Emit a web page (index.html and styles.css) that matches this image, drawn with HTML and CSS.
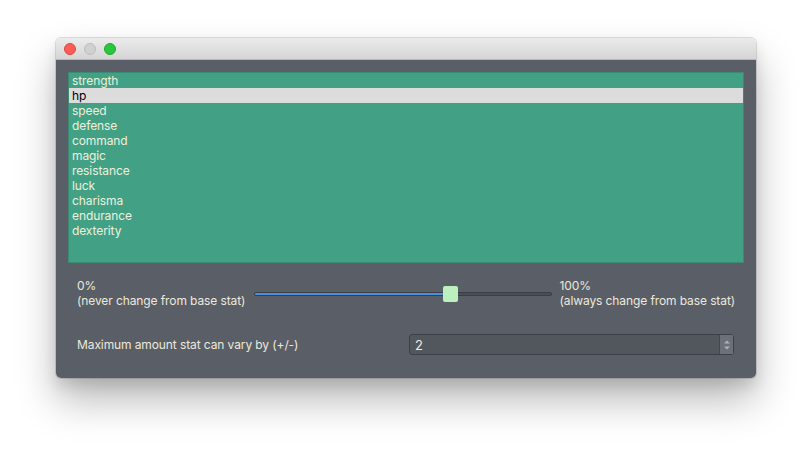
FILE: index.html
```html
<!DOCTYPE html>
<html>
<head>
<meta charset="utf-8">
<link rel="stylesheet" href="styles.css">
</head>
<body>
<div class="window">
  <div class="titlebar">
    <span class="light red"></span>
    <span class="light grey"></span>
    <span class="light green"></span>
  </div>
  <div class="content">
    <ul class="list">
      <li>strength</li>
      <li class="sel">hp</li>
      <li>speed</li>
      <li>defense</li>
      <li>command</li>
      <li>magic</li>
      <li>resistance</li>
      <li>luck</li>
      <li>charisma</li>
      <li>endurance</li>
      <li>dexterity</li>
    </ul>
    <div class="slider-row">
      <div class="label">0%<br>(never change from base stat)</div>
      <div class="slider">
        <div class="groove">
          <div class="fill" style="width:64%"></div>
        </div>
        <div class="handle" style="left:63.5%"></div>
      </div>
      <div class="label">100%<br>(always change from base stat)</div>
    </div>
    <div class="spin-row">
      <div class="spin-label">Maximum amount stat can vary by (+/-)</div>
      <div class="spin">
        <span class="value">2</span>
        <span class="arrows">
          <svg width="10" height="16" viewBox="0 0 10 16"><path d="M2 6.5 L5 3.5 L8 6.5 Z" fill="#aeb2b8"/><path d="M2 9.5 L5 12.5 L8 9.5 Z" fill="#aeb2b8"/></svg>
        </span>
      </div>
    </div>
  </div>
</div>
</body>
</html>
```

FILE: styles.css
```css
html, body { margin: 0; padding: 0; background: #ffffff; }
body {
  width: 812px; height: 452px;
  font-family: Inter, "Noto Sans", sans-serif;
  font-size: 12px;
  letter-spacing: -0.1px;
  padding: 38px 0 0 56px;
  box-sizing: border-box;
}
.window {
  width: 700px;
  height: 340px;
  border-radius: 5px;
  overflow: hidden;
  box-shadow: 0 0 0 1px rgba(0,0,0,0.12), 0 22px 40px rgba(0,0,0,0.28), 0 8px 14px rgba(0,0,0,0.1);
  display: flex;
  flex-direction: column;
}
.titlebar {
  height: 22px;
  background: linear-gradient(#ebebeb, #d5d5d5);
  border-bottom: 1px solid #b8b8b8;
  display: flex;
  align-items: center;
  gap: 8px;
  padding-left: 8px;
  box-sizing: border-box;
  flex: none;
}
.light { width: 12px; height: 12px; border-radius: 50%; box-sizing: border-box; }
.red { background: #fc5d57; border: 1px solid #e0443e; }
.grey { background: #d0d0d0; border: 1px solid #bcbcbc; }
.green { background: #2bc53f; border: 1px solid #1eaa2e; }
.content {
  flex: 1;
  background: #5a5e66;
  padding: 12px 12px 0 12px;
  display: flex;
  flex-direction: column;
  color: #ece9d8;
}
.list {
  list-style: none;
  margin: 0;
  padding: 0;
  height: 191px;
  box-sizing: border-box;
  background: #42a085;
  border: 1px solid #3d8a73;
}
.list li {
  height: 15px;
  line-height: 15px;
  padding-left: 3px;
  color: #eef0dc;
}
.list li.sel { background: #dcdcdc; color: #000; }
.slider-row {
  display: flex;
  align-items: center;
  margin-top: 15px;
  padding: 0 9px;
}
.label { line-height: 15px; color: #ece9dc; flex: none; }
.slider {
  position: relative;
  flex: 1;
  height: 16px;
  margin: 1px 8px 0 9px;
}
.groove {
  position: absolute; left: 0; right: 0; top: 6px;
  height: 4px;
  border-radius: 2px;
  background: #4a4e55;
  border: 1px solid #3b3e44;
  box-sizing: border-box;
  overflow: hidden;
}
.fill { height: 100%; background: #4a8fe0; }
.handle {
  position: absolute; top: 0;
  width: 15px; height: 16px;
  border-radius: 2px;
  background: #bdf0bf;
}
.spin-row {
  display: flex;
  align-items: center;
  margin-top: 26px;
  padding-left: 9px;
}
.spin-label { width: 332px; color: #ece9dc; }
.spin {
  width: 325px;
  height: 21px;
  box-sizing: border-box;
  border: 1px solid #3d4046;
  border-radius: 3px;
  background: #52565d;
  display: flex;
  align-items: center;
  justify-content: space-between;
}
.value { padding-left: 5px; font-size: 13px; color: #f0eee0; }
.arrows {
  width: 13px; height: 19px;
  background: #6c7078;
  border-left: 1px solid #44474d;
  display: flex; align-items: center; justify-content: center;
}
```
